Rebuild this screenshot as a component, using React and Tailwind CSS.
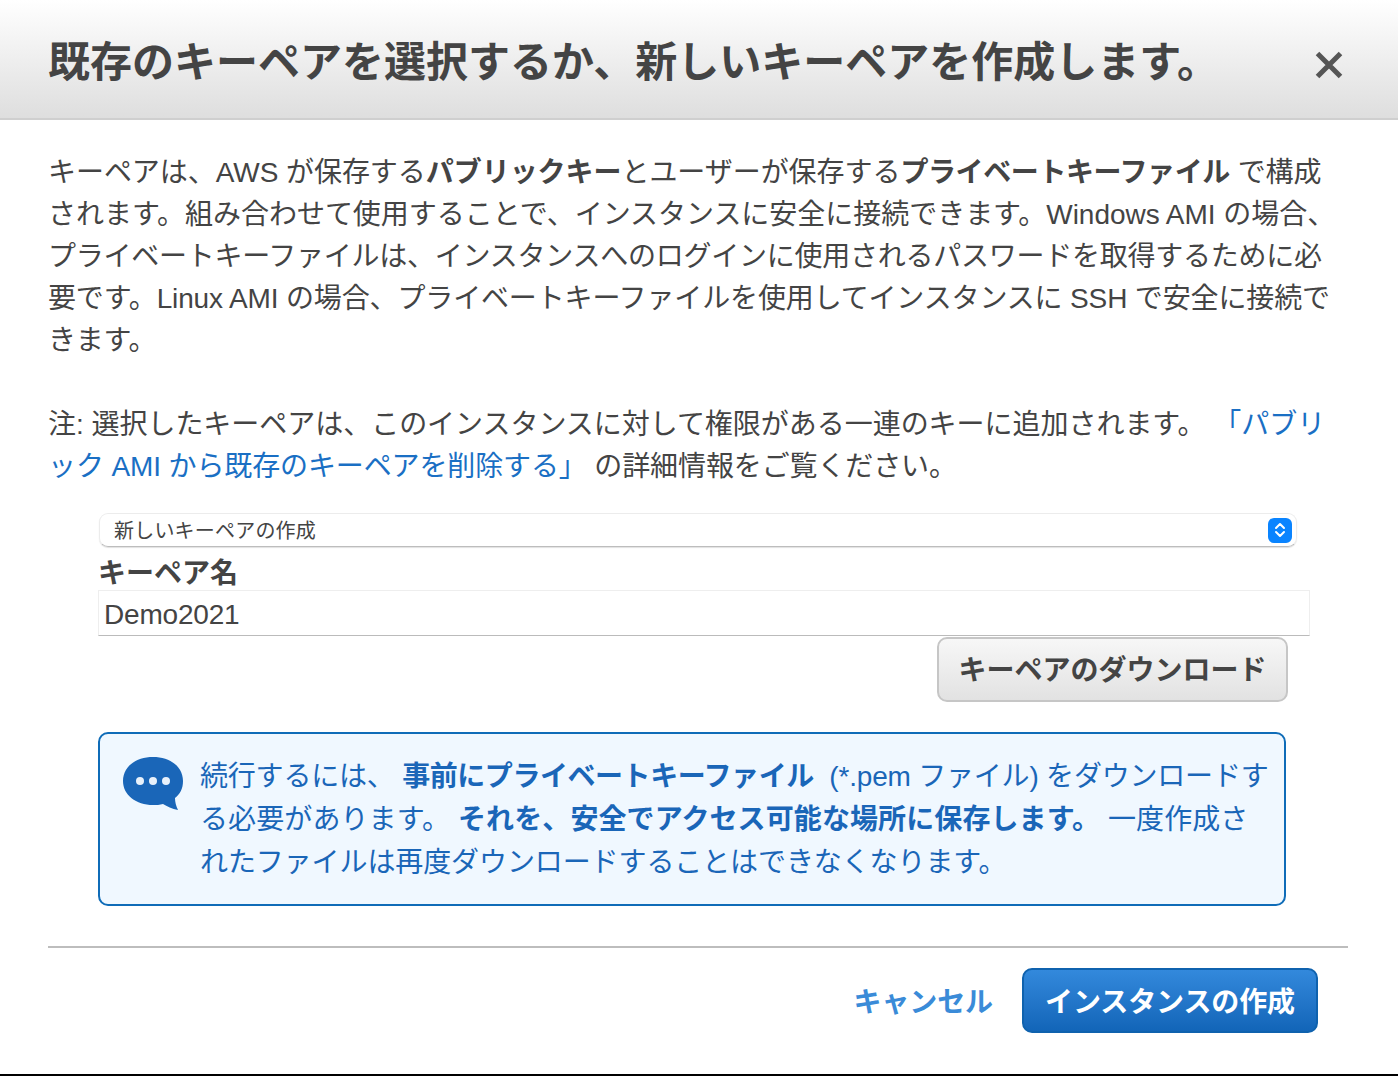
import React from 'react';

const FONT = "font-['Liberation_Sans','Noto_Sans_CJK_JP',sans-serif]";

function CloseIcon() {
    return (
        <svg width="30" height="30" viewBox="0 0 30 30" className="text-[#555]">
            <path d="M3.500 3.500 L26.500 26.500 M26.500 3.500 L3.500 26.500" stroke="currentColor" strokeWidth="5" fill="none" />
        </svg>
    );
}

function SelectArrows() {
    return (
        <span className="flex h-[25px] w-[24px] items-center justify-center rounded-[6px] bg-[#0a84ff]">
            <svg width="12" height="18" viewBox="0 0 12 18">
                <path d="M2 7 L6 3 L10 7 M2 11 L6 15 L10 11" stroke="white" strokeWidth="2" fill="none" strokeLinecap="round" strokeLinejoin="round" />
            </svg>
        </span>
    );
}

function BubbleIcon() {
    return (
        <svg width="62" height="56" viewBox="0 0 62 56" className="mt-[1px] shrink-0">
            <path d="M31 1 C48 1 61 10.500 61 25 C61 33 58 38 53 42 C53 46 54 50 56 54 C50 53 45 50 41 48 C38 49 34 49 31 49 C14 49 1 39 1 25 C1 10.500 14 1 31 1 Z" fill="#1a66b8" />
            <circle cx="18" cy="25" r="4" fill="#e8f1fb" />
            <circle cx="31" cy="25" r="4" fill="#e8f1fb" />
            <circle cx="44" cy="25" r="4" fill="#e8f1fb" />
        </svg>
    );
}

export default function App() {
    return (
        <div className={`flex h-[1076px] w-[1398px] flex-col overflow-hidden bg-white text-[#444] ${FONT}`}>
            {/* header */}
            <div className="flex h-[120px] shrink-0 items-start justify-between border-b-2 border-[#cfcfcf] bg-gradient-to-b from-white to-[#dedede] pl-[48px] pr-[54px]">
                <h1 className="mt-[38px] whitespace-nowrap text-[42px] leading-[50px] font-bold text-[#444]">既存のキーペアを選択するか、新しいキーペアを作成します。</h1>
                <div className="mt-[50px]"><CloseIcon /></div>
            </div>

            {/* body */}
            <div className="flex flex-1 flex-col pl-[48px]">
                <div className="mt-[32px] whitespace-nowrap text-[28px] leading-[42px]">
                    <p className="tracking-[-0.05px]">キーペアは、AWS が保存する<b>パブリックキー</b>とユーザーが保存する<b className="tracking-[-0.4px]">プライベートキーファイル</b> で構成</p>
                    <p className="tracking-[-0.03px]">されます。組み合わせて使用することで、インスタンスに安全に接続できます。Windows AMI の場合、</p>
                    <p className="tracking-[-0.25px]">プライベートキーファイルは、インスタンスへのログインに使用されるパスワードを取得するために必</p>
                    <p className="tracking-[-0.14px]">要です。Linux AMI の場合、プライベートキーファイルを使用してインスタンスに SSH で安全に接続で</p>
                    <p className="tracking-[-0.25px]">きます。</p>
                </div>
                <div className="mt-[42px] whitespace-nowrap text-[28px] leading-[42px]">
                    <p className="tracking-[-0.03px]">注: 選択したキーペアは、このインスタンスに対して権限がある一連のキーに追加されます。 <span className="text-[#1a6fc4]">「パブリ</span></p>
                    <p className="tracking-[-0.12px]"><span className="text-[#1a6fc4]">ック AMI から既存のキーペアを削除する」</span> の詳細情報をご覧ください。</p>
                </div>

                <div className="ml-[51px] mt-[25px] flex h-[34px] w-[1198px] items-center justify-between rounded-[9px] border border-[#ececec] border-b-[#bdbdbd] pl-[14px] pr-[4px] text-[20px] tracking-[0.2px] shadow-[0_1px_1px_rgba(0,0,0,0.12)]">
                    <span className="pt-[2px]">新しいキーペアの作成</span>
                    <SelectArrows />
                </div>

                <label className="ml-[50px] mt-[10px] text-[28px] leading-[33px] font-bold">キーペア名</label>
                <div className="ml-[50px] flex h-[46px] w-[1212px] items-center border border-[#eeeeee] border-b-[#bbbbbb] pl-[5px] pt-[4px] text-[28px] tracking-[-0.2px]">Demo2021</div>

                <div className="mr-[110px] mt-[1px] flex justify-end">
                    <button className="flex h-[65px] w-[351px] items-center justify-center rounded-[10px] border-2 border-[#c6c6c6] bg-gradient-to-b from-[#f7f7f7] to-[#e2e2e2] pt-[2px] text-[28px] font-bold text-[#444]">キーペアのダウンロード</button>
                </div>

                <div className="ml-[50px] mt-[30px] flex h-[174px] w-[1188px] gap-[16px] rounded-[10px] border-2 border-[#0f6cb8] bg-[#f0f8ff] pl-[22px] pt-[21px] text-[#1a66b8]">
                    <BubbleIcon />
                    <div className="whitespace-nowrap text-[28px] leading-[43px]">
                        <p className="tracking-[-0.2px]">続行するには、 <b className="tracking-[-0.45px]">事前にプライベートキーファイル</b> <span className="ml-[8px]">(*.pem ファイル) をダウンロードす</span></p>
                        <p className="tracking-[0.1px]">る必要があります。 <b>それを、安全でアクセス可能な場所に保存します。</b> 一度作成さ</p>
                        <p className="tracking-[-0.1px]">れたファイルは再度ダウンロードすることはできなくなります。</p>
                    </div>
                </div>

                <div className="mt-[40px] h-[2px] w-[1300px] bg-[#bdbdbd]" />

                <div className="mr-[80px] mt-[20px] flex items-center justify-end gap-[29px]">
                    <a className="pt-[5px] text-[28px] font-bold tracking-[-0.1px] text-[#3a8bd8]">キャンセル</a>
                    <button className="flex h-[65px] w-[296px] items-center justify-center rounded-[10px] border-2 border-[#0f62ae] bg-gradient-to-b from-[#3389dc] to-[#1265b8] pt-[5px] text-[28px] font-bold tracking-[-0.1px] text-white">インスタンスの作成</button>
                </div>
            </div>

            <div className="h-[2px] shrink-0 bg-black" />
        </div>
    );
}
